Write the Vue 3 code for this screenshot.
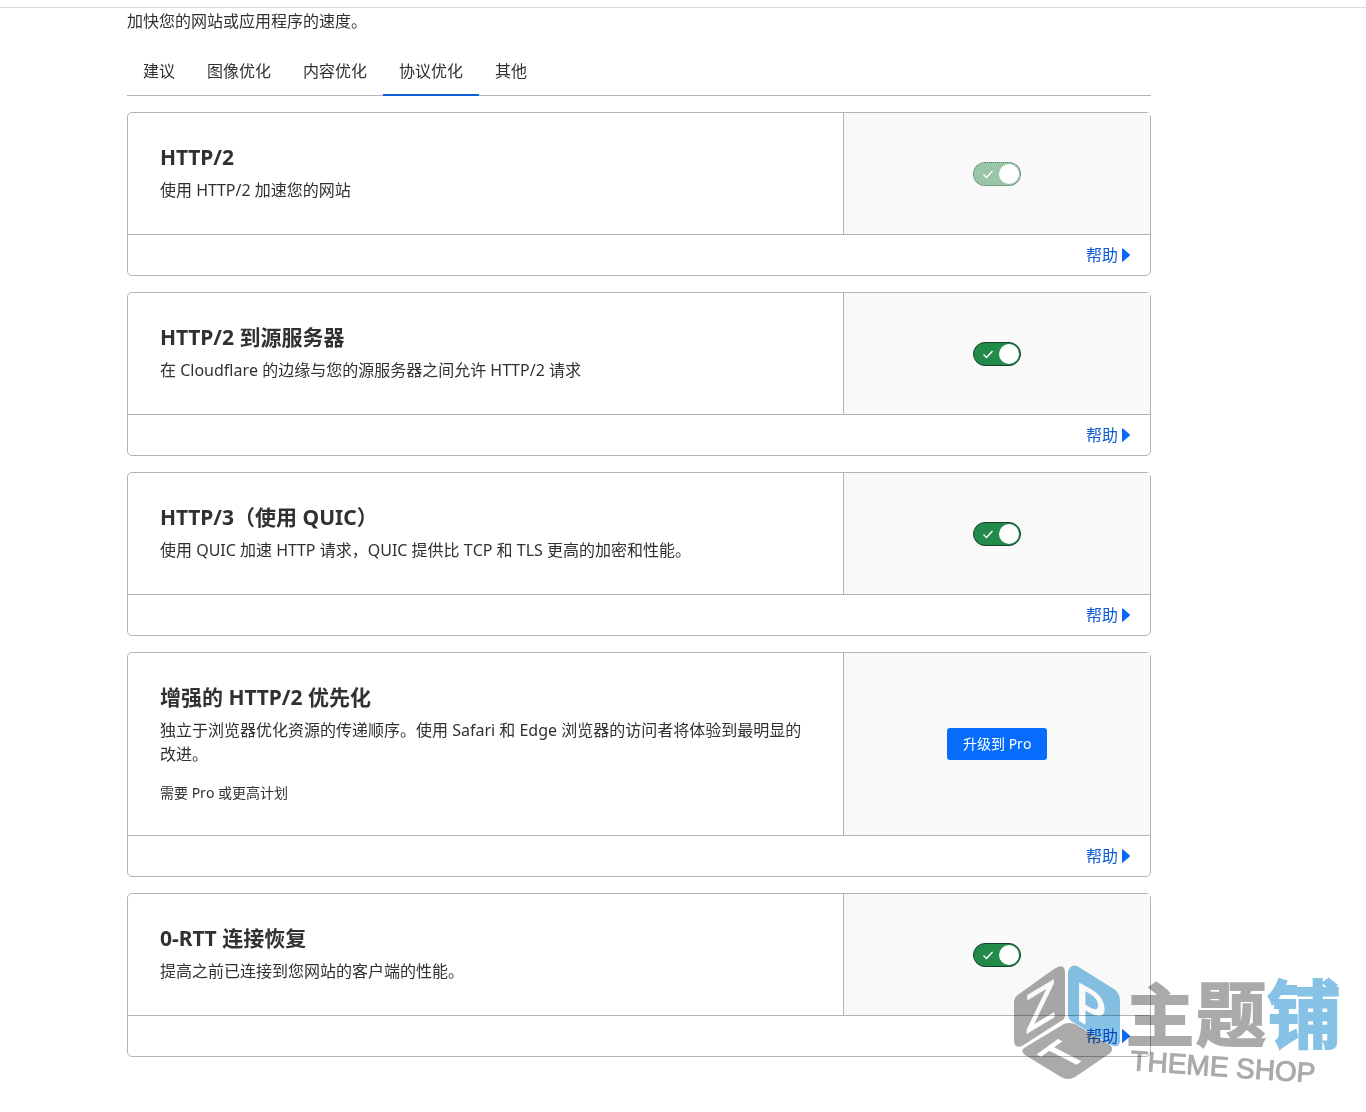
<script setup>
import { ref } from 'vue'

const tabs = ['建议', '图像优化', '内容优化', '协议优化', '其他']
const activeTab = ref('协议优化')

const settings = ref([
  { id: 'http2', title: 'HTTP/2', text: '使用 HTTP/2 加速您的网站', on: true, locked: true },
  { id: 'origin', title: 'HTTP/2 到源服务器', text: '在 Cloudflare 的边缘与您的源服务器之间允许 HTTP/2 请求', on: true },
  { id: 'http3', title: 'HTTP/3（使用 QUIC）', text: '使用 QUIC 加速 HTTP 请求，QUIC 提供比 TCP 和 TLS 更高的加密和性能。', on: true },
  {
    id: 'priority',
    title: '增强的 HTTP/2 优先化',
    text: '独立于浏览器优化资源的传递顺序。使用 Safari 和 Edge 浏览器的访问者将体验到最明显的改进。',
    note: '需要 Pro 或更高计划',
    upgrade: '升级到 Pro'
  },
  { id: 'rtt', title: '0-RTT 连接恢复', text: '提高之前已连接到您网站的客户端的性能。', on: true }
])
</script>

<template>
  <div class="page">
    <main class="content">
      <p class="intro">加快您的网站或应用程序的速度。</p>

      <nav class="tabs">
        <a
          v-for="tab in tabs"
          :key="tab"
          href="#"
          class="tab"
          :class="{ active: tab === activeTab }"
          @click.prevent="activeTab = tab"
        >{{ tab }}</a>
      </nav>

      <section v-for="item in settings" :key="item.id" class="card">
        <div class="card-main">
          <div class="info">
            <h2 :id="item.id">{{ item.title }}</h2>
            <p>{{ item.text }}</p>
            <p v-if="item.note" class="note">{{ item.note }}</p>
          </div>
          <div class="control">
            <button v-if="item.upgrade" type="button" class="upgrade">{{ item.upgrade }}</button>
            <label v-else class="toggle">
              <input v-model="item.on" type="checkbox" :disabled="item.locked" :aria-labelledby="item.id" />
              <svg v-if="item.on" viewBox="0 0 12 12" aria-hidden="true">
                <path d="M1.5 6.5 4.5 9.5 10.5 3" />
              </svg>
            </label>
          </div>
        </div>
        <footer class="card-foot">
          <a href="#" class="help">
            帮助
            <svg viewBox="0 0 8 14" aria-hidden="true"><path d="M0 0.5 Q0.4 0 1 0.5 L7.6 6.3 Q8.2 7 7.6 7.7 L1 13.5 Q0.4 14 0 13.5Z" /></svg>
          </a>
        </footer>
      </section>
    </main>

    <svg class="watermark" viewBox="0 0 340 140" role="img" aria-label="主题铺 THEME SHOP">
      <g class="grey">
        <path d="M4 41 Q4 35 9 32 L44 7 Q55 0 55 11 V53 Q55 57 51 59 L12 84 Q4 87 4 78Z" />
        <path d="M14 86 L54 62 Q59 60 65 62 L100 83 Q105 87 99 92 L65 115 Q58 119 51 115 L15 93 Q10 89 14 86Z" />
      </g>
      <path class="blue" d="M58 10 Q60 2 67 4 L104 27 Q110 31 110 39 V79 Q109 87 101 83 L61 59 Q58 57 58 52Z" />
      <g class="face">
        <text transform="translate(15 73) skewY(-31)" font-size="54">Z</text>
        <text transform="translate(64 56) skewY(30)" font-size="54">P</text>
        <text transform="matrix(0.8 -0.58 0.89 0.46 69 101)" text-anchor="middle" font-size="50">T</text>
      </g>
      <g class="brand">
        <text class="grey" x="116" y="79" font-size="68">主</text>
        <text class="grey" x="186" y="79" font-size="70">题</text>
        <text class="blue" x="257" y="80" font-size="74">铺</text>
      </g>
      <text class="grey latin" transform="translate(120 108) rotate(4)">THEME SHOP</text>
    </svg>
  </div>
</template>

<style>
body {
  margin: 0;
  background: #fff;
}
</style>

<style scoped>
.page {
  position: relative;
  margin-top: 7px;
  border-top: 1px solid #d9dcdc;
  padding-bottom: 39px;
  color: #313131;
  font: 16px/24px "Noto Sans", "Noto Sans CJK SC", sans-serif;
  font-kerning: none;
}
.content {
  max-width: 1024px;
  margin-left: 127px;
}
p,
h2 {
  margin: 0;
}
.intro {
  padding: 1px 0 14px;
}
.tabs {
  display: flex;
  border-bottom: 1px solid #b2b4b6;
  margin-bottom: 16px;
}
.tab {
  padding: 12px 16px;
  margin-bottom: -1px;
  border-bottom: 1px solid transparent;
  color: inherit;
  text-decoration: none;
}
.tab.active {
  box-shadow: inset 0 -1px #0f5fd6;
  border-bottom-color: #0f5fd6;
}
.card {
  border: 1px solid #b2b4b6;
  border-radius: 5px;
  margin-bottom: 16px;
}
.card-main {
  display: flex;
  border-bottom: 1px solid #b2b4b6;
}
.info {
  box-sizing: border-box;
  width: 70%;
  padding: 32px;
}
h2 {
  margin-bottom: 8px;
  font-size: 21px;
  line-height: 25px;
  font-weight: 700;
}
.note {
  margin-top: 16px;
  font-size: 14px;
  line-height: 21px;
}
.control {
  box-sizing: border-box;
  width: 30%;
  display: flex;
  align-items: center;
  justify-content: center;
  border-left: 1px solid #b2b4b6;
  background: #f9f9f9;
}
.toggle {
  display: grid;
  align-items: center;
}
.toggle > * {
  grid-area: 1 / 1;
}
.toggle input {
  appearance: none;
  box-sizing: border-box;
  display: flex;
  width: 48px;
  height: 24px;
  margin: 0;
  padding: 1px;
  border: 1px solid #12432a;
  border-radius: 12px;
  background: #8d9196;
}
.toggle input::after {
  content: "";
  width: 20px;
  height: 20px;
  border-radius: 50%;
  background: #fff;
}
.toggle input:checked {
  justify-content: flex-end;
  background: #228b49;
}
.toggle input:disabled {
  border: 1px dotted #587565;
  background: #99c5a9;
}
.toggle svg {
  width: 12px;
  height: 12px;
  margin-left: 9px;
  pointer-events: none;
  fill: none;
  stroke: #fff;
  stroke-width: 1.4;
}
.upgrade {
  height: 32px;
  padding: 0 16px;
  border: 0;
  border-radius: 3px;
  background: #056cfb;
  color: #fff;
  font: inherit;
  font-size: 14px;
}
.card-foot {
  display: flex;
  justify-content: flex-end;
  padding: 8px 20px;
}
.help {
  display: flex;
  align-items: center;
  gap: 4px;
  color: #0b5cd5;
  text-decoration: none;
}
.help svg {
  width: 8px;
  height: 14px;
  fill: #0868f8;
}
.watermark {
  position: absolute;
  right: 16px;
  bottom: 10px;
  width: 340px;
  height: 140px;
  overflow: visible;
  pointer-events: none;
  mix-blend-mode: multiply;
}
.grey {
  fill: #aaa;
}
.blue {
  fill: #86c2e5;
}
.face {
  fill: #fff;
  font-family: "Open Sans", sans-serif;
  font-weight: 600;
}
.brand {
  font-family: "Noto Sans CJK SC", sans-serif;
  font-weight: 700;
}
.brand .grey {
  stroke: #aaa;
  stroke-width: 2;
}
.brand .blue {
  stroke: #86c2e5;
  stroke-width: 2;
}
.latin {
  font: 28px "Liberation Sans", sans-serif;
  stroke: #aaa;
  stroke-width: 1;
}
</style>
